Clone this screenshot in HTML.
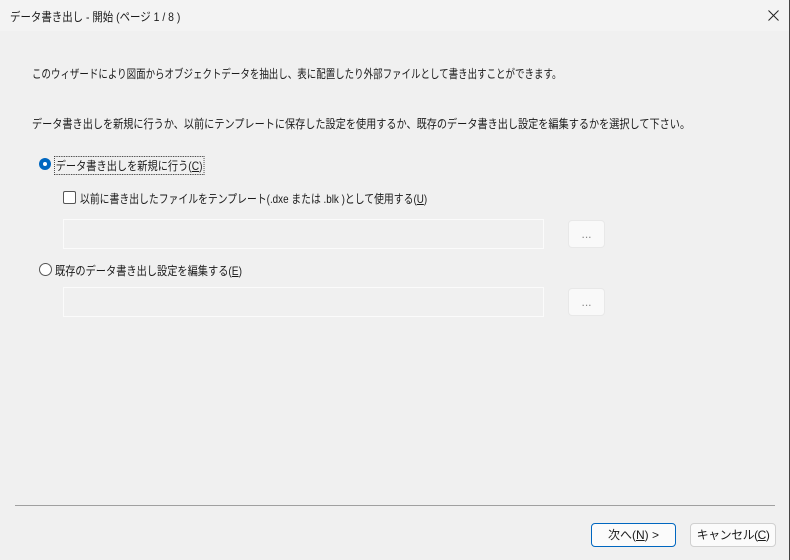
<!DOCTYPE html>
<html><head><meta charset="utf-8"><style>
body{margin:0;width:790px;height:560px;overflow:hidden;background:#f0f0f0;font-family:"Liberation Sans","Noto Sans CJK JP",sans-serif;font-size:12px;color:#1a1a1a;position:relative}
.a{position:absolute;white-space:nowrap;transform-origin:left center}
.title{left:0;top:0;width:789px;height:31px;background:#f3f3f3}
.inp{position:absolute;border:1px solid #fbfbfb;background:#f0f0f0;box-sizing:border-box}
.btn{position:absolute;background:#f9f9f9;border:1px solid #e8e8e8;border-radius:4px;box-sizing:border-box;text-align:center;color:#888}
</style></head><body>
<div class="a title"></div>
<div class="a" style="left:10px;top:8px;transform:scaleX(0.87)">データ書き出し - 開始 (ページ 1 / 8 )</div>
<svg class="a" style="left:768px;top:10px" width="11" height="11"><path d="M0.5 0.5L10.5 10.5M10.5 0.5L0.5 10.5" stroke="#222" stroke-width="1"/></svg>
<div class="a" style="right:0;top:0;width:1px;height:560px;background:#444"></div>
<div class="a" style="left:32px;top:65px;transform:scaleX(0.79)">このウィザードにより図面からオブジェクトデータを抽出し、表に配置したり外部ファイルとして書き出すことができます。</div>
<div class="a" style="left:32px;top:115px;transform:scaleX(0.845)">データ書き出しを新規に行うか、以前にテンプレートに保存した設定を使用するか、既存のデータ書き出し設定を編集するかを選択して下さい。</div>
<div class="a" style="left:39px;top:158px;width:12px;height:12px;border-radius:50%;background:#0067c0"><div style="position:absolute;left:4px;top:4px;width:4px;height:4px;border-radius:50%;background:#fff"></div></div>
<div class="a" style="left:54px;top:156px;border:1px dotted #333;padding:0 1px;transform:scaleX(0.85)">データ書き出しを新規に行う(<u>C</u>)</div>
<div class="a" style="left:63px;top:191px;width:11px;height:11px;border:1px solid #555;border-radius:2px;background:#fff"></div>
<div class="a" style="left:80px;top:190px;transform:scaleX(0.82)">以前に書き出したファイルをテンプレート(.dxe または .blk )として使用する(<u>U</u>)</div>
<div class="inp" style="left:63px;top:219px;width:481px;height:30px"></div>
<div class="btn" style="left:568px;top:220px;width:37px;height:28px;line-height:26px">...</div>
<div class="a" style="left:39px;top:263px;width:11px;height:11px;border-radius:50%;border:1px solid #555;background:#fff"></div>
<div class="a" style="left:55px;top:262px;transform:scaleX(0.85)">既存のデータ書き出し設定を編集する(<u>E</u>)</div>
<div class="inp" style="left:63px;top:287px;width:481px;height:30px"></div>
<div class="btn" style="left:568px;top:288px;width:37px;height:28px;line-height:26px">...</div>
<div class="a" style="left:15px;top:505px;width:760px;height:1px;background:#a0a0a0"></div>
<div class="btn" style="left:591px;top:523px;width:85px;height:24px;line-height:22px;border:1px solid #0067c0;color:#1a1a1a;background:#fbfbfb">次へ(<u>N</u>) &gt;</div>
<div class="btn" style="left:690px;top:523px;width:86px;height:24px;line-height:22px;border:1px solid #d0d0d0;color:#1a1a1a;background:#fbfbfb;letter-spacing:-0.5px">キャンセル(<u>C</u>)</div>
</body></html>
